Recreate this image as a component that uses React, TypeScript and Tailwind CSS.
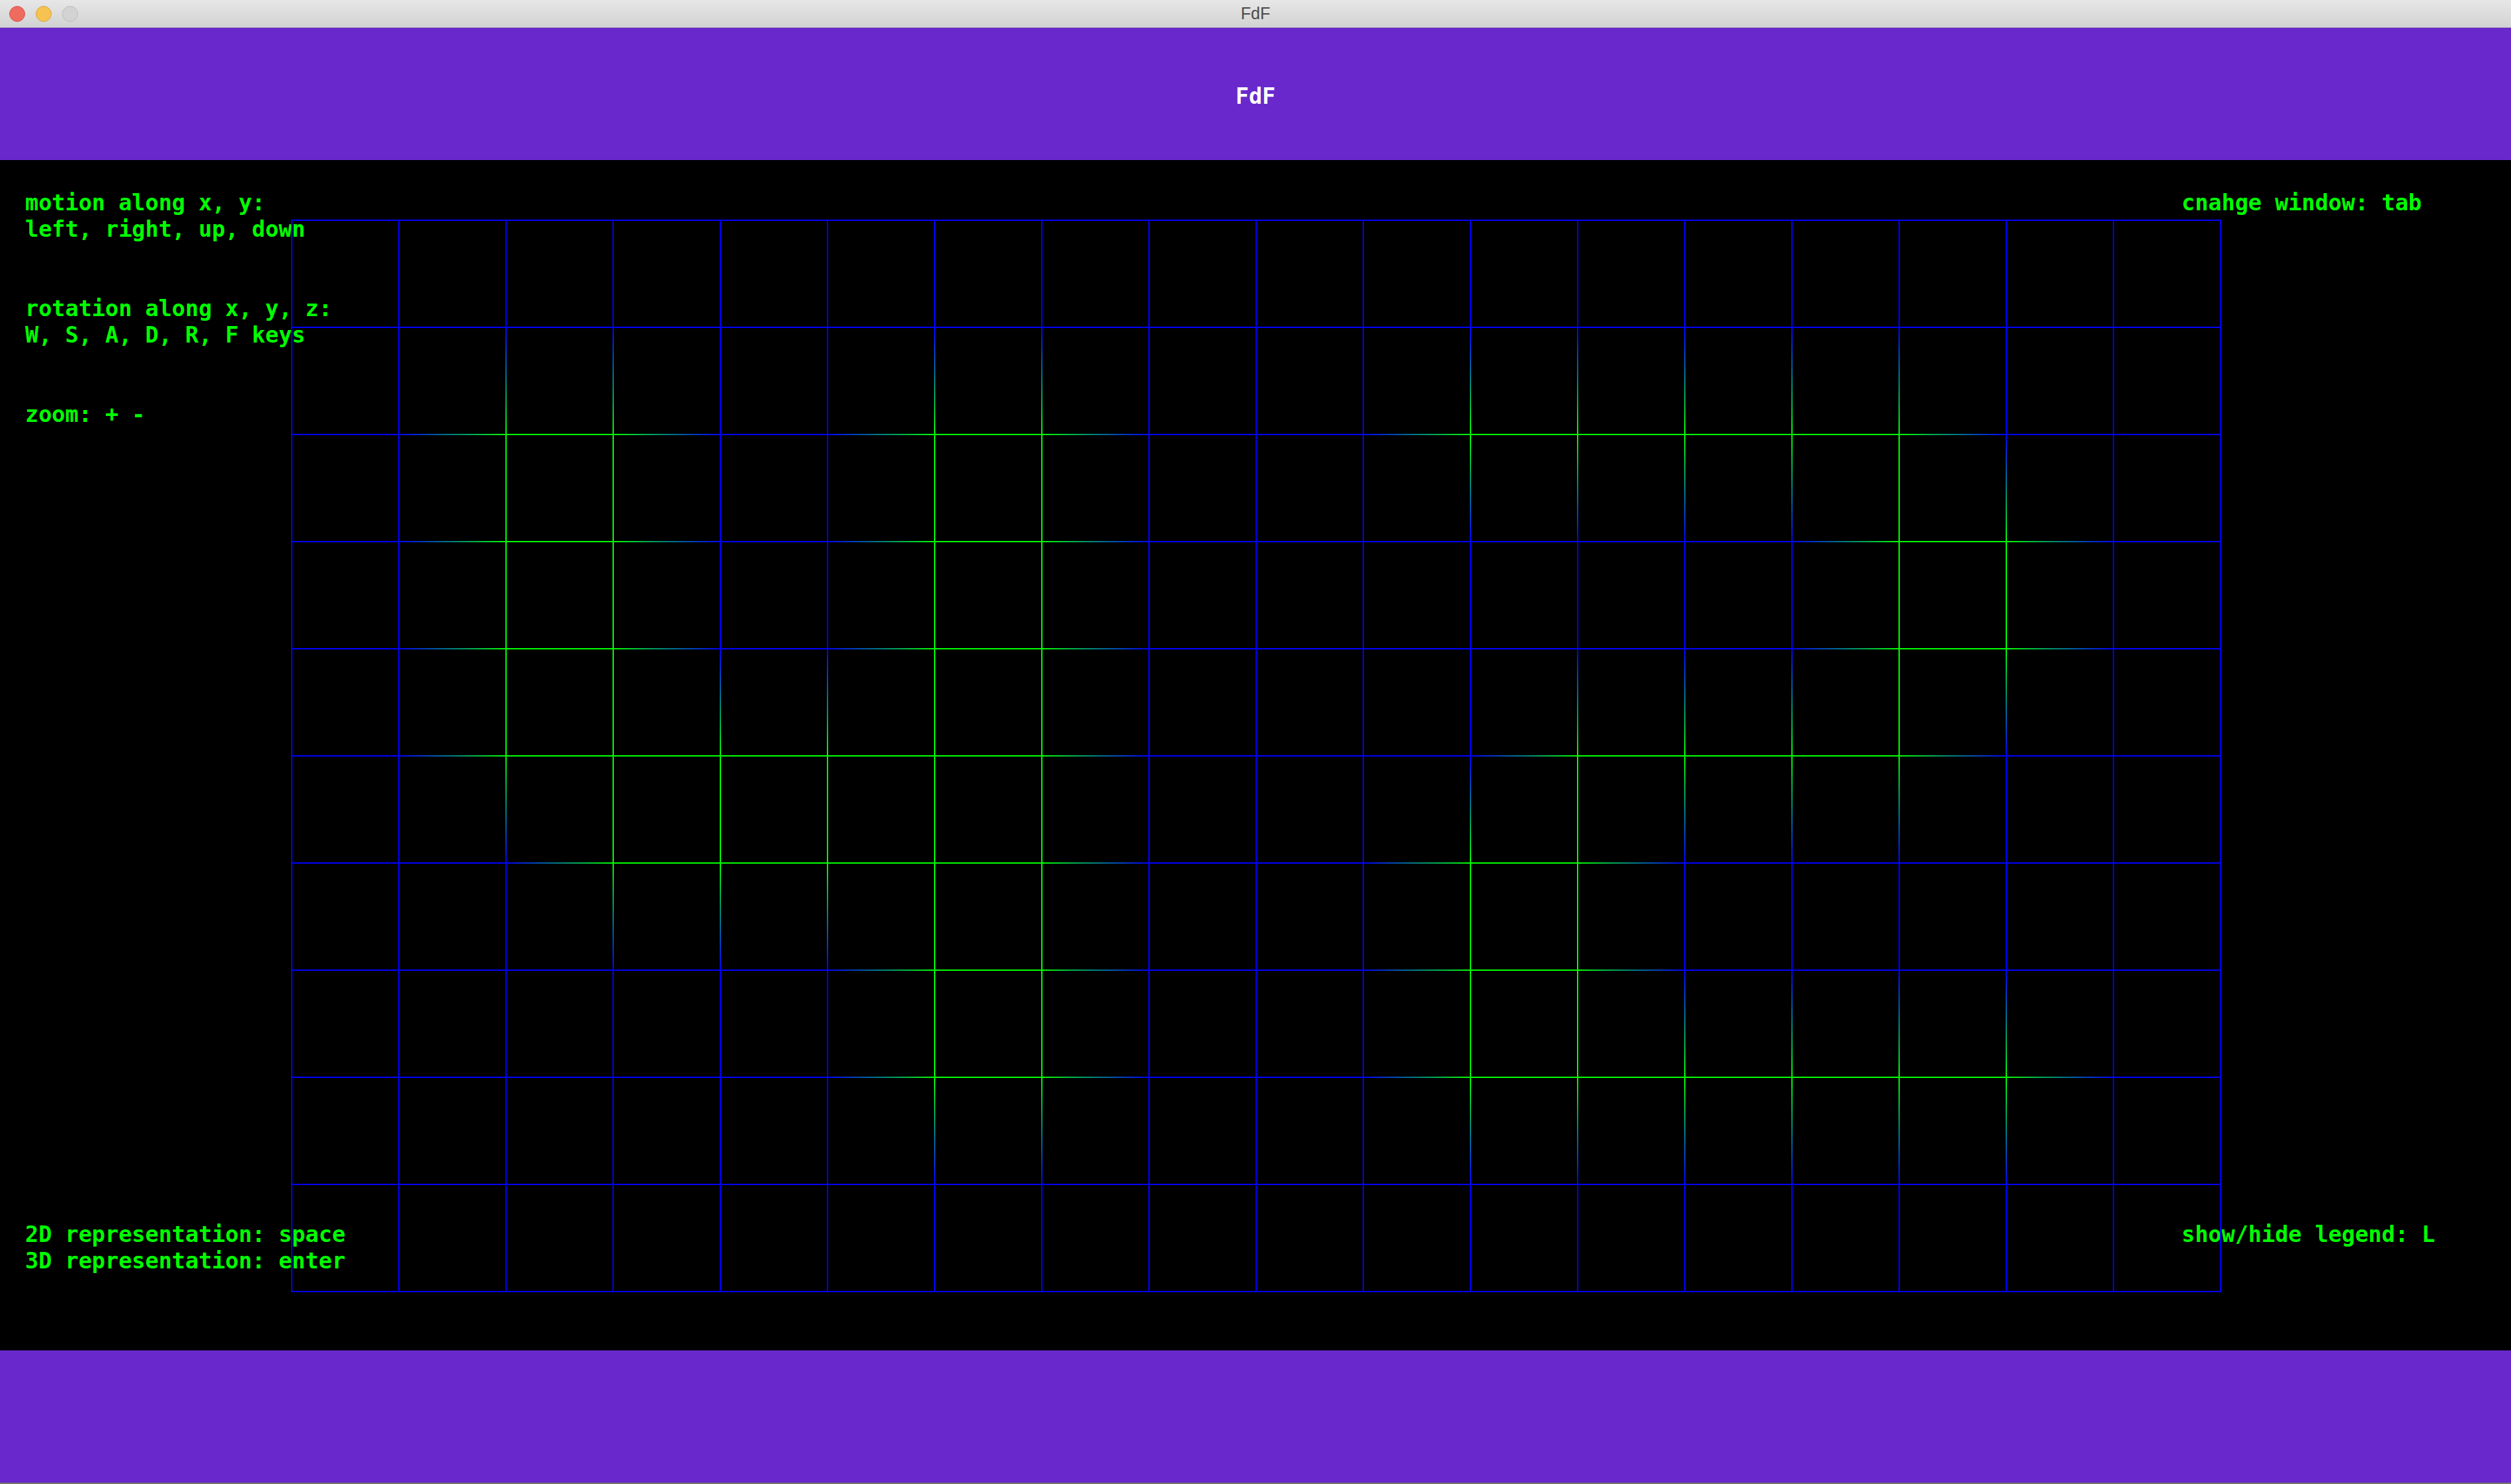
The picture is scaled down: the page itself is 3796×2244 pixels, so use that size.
import React from "react";

const MAP: number[][] = [
  "0 0 0 0 0 0 0 0 0 0 0 0 0 0 0 0 0 0 0",
  "0 0 0 0 0 0 0 0 0 0 0 0 0 0 0 0 0 0 0",
  "0 0 10 10 0 0 10 10 0 0 0 10 10 10 10 10 0 0 0",
  "0 0 10 10 0 0 10 10 0 0 0 0 0 0 0 10 10 0 0",
  "0 0 10 10 0 0 10 10 0 0 0 0 0 0 0 10 10 0 0",
  "0 0 10 10 10 10 10 10 0 0 0 0 10 10 10 10 0 0 0",
  "0 0 0 10 10 10 10 10 0 0 0 10 10 0 0 0 0 0 0",
  "0 0 0 0 0 0 10 10 0 0 0 10 10 0 0 0 0 0 0",
  "0 0 0 0 0 0 10 10 0 0 0 10 10 10 10 10 10 0 0",
  "0 0 0 0 0 0 0 0 0 0 0 0 0 0 0 0 0 0 0",
  "0 0 0 0 0 0 0 0 0 0 0 0 0 0 0 0 0 0 0",
].map((r) => r.split(" ").map(Number));

const X0 = 441;
const Y0 = 91;
const STEP = 162;
const LOW = "#0000ff";
const HIGH = "#00ff00";

type Seg = { x1: number; y1: number; x2: number; y2: number; z1: number; z2: number };

function buildSegments(): Seg[] {
  const segs: Seg[] = [];
  const rows = MAP.length;
  const cols = MAP[0].length;
  for (let r = 0; r < rows; r++) {
    for (let c = 0; c < cols; c++) {
      const x = X0 + c * STEP;
      const y = Y0 + r * STEP;
      if (c + 1 < cols)
        segs.push({ x1: x, y1: y, x2: x + STEP, y2: y, z1: MAP[r][c], z2: MAP[r][c + 1] });
      if (r + 1 < rows)
        segs.push({ x1: x, y1: y, x2: x, y2: y + STEP, z1: MAP[r][c], z2: MAP[r + 1][c] });
    }
  }
  return segs;
}

const color = (z: number) => (z > 0 ? HIGH : LOW);

function Wireframe() {
  const segs = buildSegments();
  return (
    <svg
      className="pointer-events-none absolute inset-0"
      width={3796}
      height={1800}
      viewBox="0 0 3796 1800"
    >
      <defs>
        {segs.map((s, i) =>
          s.z1 !== s.z2 ? (
            <linearGradient
              key={i}
              id={`g${i}`}
              gradientUnits="userSpaceOnUse"
              x1={s.x1}
              y1={s.y1}
              x2={s.x2}
              y2={s.y2}
            >
              <stop offset="0" stopColor={color(s.z1)} />
              <stop offset="1" stopColor={color(s.z2)} />
            </linearGradient>
          ) : null
        )}
      </defs>
      {segs.map((s, i) => (
        <line
          key={i}
          x1={s.x1}
          y1={s.y1}
          x2={s.x2}
          y2={s.y2}
          stroke={s.z1 !== s.z2 ? `url(#g${i})` : color(s.z1)}
          strokeWidth={2}
          strokeLinecap="square"
        />
      ))}
    </svg>
  );
}

function Line({ children }: { children?: React.ReactNode }) {
  return <div className="h-[40px] whitespace-pre leading-[40px]">{children}</div>;
}

export default function App() {
  return (
    <div className="flex h-[2244px] w-[3796px] flex-col overflow-hidden">
      {/* window title bar */}
      <div className="grid h-[41px] grid-cols-[1fr_auto_1fr] items-center bg-gradient-to-b from-[#e8e7e8] to-[#d2d2d2]">
        <div className="flex items-center gap-[16px] pl-[14px]">
          <span className="h-[24px] w-[24px] rounded-full border border-[#d8574c] bg-[#ee6b60]" />
          <span className="h-[24px] w-[24px] rounded-full border border-[#d9a441] bg-[#f6c250]" />
          <span className="h-[24px] w-[24px] rounded-full border border-[#bcbcbc] bg-[#d3d3d3]" />
        </div>
        <div className="font-['Liberation_Sans',sans-serif] text-[25px] text-[#4a4a4a]">FdF</div>
        <div />
      </div>
      <div className="h-[1px] bg-[#b9b9b9]" />

      {/* header */}
      <header className="flex h-[200px] justify-center bg-[#6928cb] pt-[84px] font-['DejaVu_Sans_Mono',monospace] text-[33.5px] font-bold text-white">
        <div className="h-[40px] leading-[40px]">FdF</div>
      </header>

      {/* canvas */}
      <main className="relative flex h-[1800px] justify-between bg-black font-['DejaVu_Sans_Mono',monospace] text-[33.5px] font-bold text-[#00ff00]">
        <div className="flex flex-col justify-between pb-[115px] pl-[38px] pt-[45px]">
          <div>
            <Line>motion along x, y:</Line>
            <Line>left, right, up, down</Line>
            <Line />
            <Line />
            <Line>rotation along x, y, z:</Line>
            <Line>W, S, A, D, R, F keys</Line>
            <Line />
            <Line />
            <Line>zoom: + -</Line>
          </div>
          <div>
            <Line>2D representation: space</Line>
            <Line>3D representation: enter</Line>
          </div>
        </div>
        <div className="flex w-[498px] flex-col justify-between pb-[155px] pt-[45px]">
          <Line>cnahge window: tab</Line>
          <Line>show/hide legend: L</Line>
        </div>
        <Wireframe />
      </main>

      {/* footer */}
      <footer className="h-[200px] bg-[#6928cb]" />
      <div className="h-[2px] bg-[#77776f]" />
    </div>
  );
}
